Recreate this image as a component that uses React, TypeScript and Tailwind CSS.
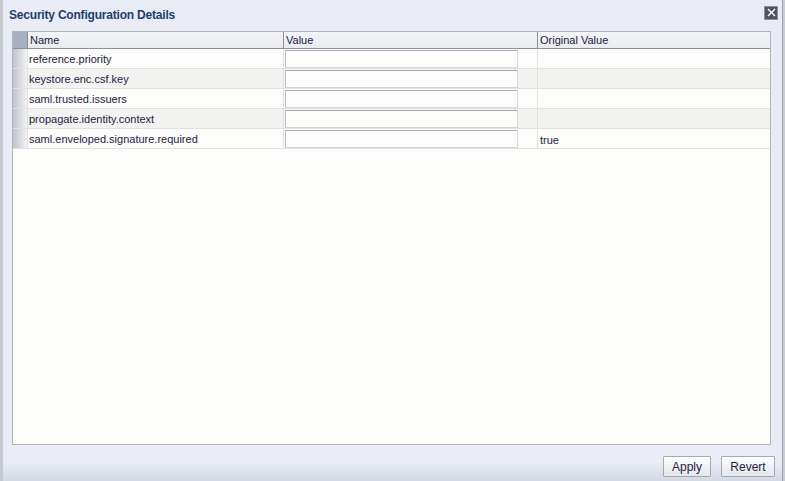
import React from "react";

const rows = [
  { name: "reference.priority", original: "" },
  { name: "keystore.enc.csf.key", original: "" },
  { name: "saml.trusted.issuers", original: "" },
  { name: "propagate.identity.context", original: "" },
  { name: "saml.enveloped.signature.required", original: "true" },
];

const App = () => {
  return (
    <div
      className="w-[785px] h-[481px] flex bg-[#e9ecf4] text-[#1c2246] overflow-hidden"
      style={{ fontFamily: '"Liberation Sans", Arial, sans-serif' }}
    >
      <div className="w-[3px] bg-[#c6c9d0]" />
      <div className="flex-1 flex flex-col">
        {/* title bar */}
        <div className="h-[29px] flex items-center justify-between pl-[6px] pr-[4px]">
          <span className="text-[12px] font-bold text-[#1e3f6b] tracking-[-0.2px]">
            Security Configuration Details
          </span>
          <button className="w-[14px] h-[14px] mb-[4px] bg-[#4f545c] border border-[#8a8f98] flex items-center justify-center">
            <svg width="9" height="9" viewBox="0 0 9 9">
              <path d="M1 1L8 8M8 1L1 8" stroke="#ffffff" strokeWidth="1.4" />
            </svg>
          </button>
        </div>

        {/* table */}
        <div className="ml-[9px] mr-[11px] h-[414px] border border-[#b4b4b4] bg-[#fcfcfa] mt-[2px]">
          <div className="h-[17px] flex border-b border-[#8e9098] bg-gradient-to-b from-[#f4f5f7] to-[#e9ebee] text-[11px] leading-[17px]">
            <div className="w-[15px] bg-[#a8b0c2] border-r border-[#8e9098]" />
            <div className="w-[256px] pl-[2px] border-r border-[#8e9098]">Name</div>
            <div className="w-[254px] pl-[2px] border-r border-[#8e9098]">Value</div>
            <div className="flex-1 pl-[2px]">Original Value</div>
          </div>
          {rows.map((r, i) => (
            <div
              key={r.name}
              className={`h-[20px] flex border-b border-[#e2e2e2] text-[11px] ${
                i % 2 === 1 ? "bg-[#f2f2f0]" : "bg-[#fcfcfa]"
              }`}
            >
              <div className="w-[15px] bg-gradient-to-r from-[#bfc3cc] to-[#f2f3f6] border-r border-[#e2e2e2]" />
              <div className="w-[256px] pl-[1px] pt-[2px] flex items-center border-r border-[#e2e2e2]">
                {r.name}
              </div>
              <div className="w-[254px] pl-[1px] flex items-center border-r border-[#e2e2e2]">
                <div className="w-[233px] h-[18px] bg-[#fcfcfa] border border-[#d4d6da] border-t-[#a6abb4] border-l-[#b8bcc4]" />
              </div>
              <div className="flex-1 pl-[2px] flex items-center pt-[3px]">{r.original}</div>
            </div>
          ))}
        </div>

        {/* footer */}
        <div className="flex-1 flex items-start justify-end gap-[10px] pr-[7px] pt-[11px] bg-gradient-to-b from-[#e9ecf4] from-50% to-[#d3d8e2]">
          <button className="w-[48px] h-[21px] text-[12px] text-[#1c2246] border border-[#a4a8b0] bg-gradient-to-b from-[#ffffff] to-[#e4e6ea] rounded-[1px]">
            Apply
          </button>
          <button className="w-[54px] h-[21px] text-[12px] text-[#1c2246] border border-[#a4a8b0] bg-gradient-to-b from-[#ffffff] to-[#e4e6ea] rounded-[1px]">
            Revert
          </button>
        </div>
      </div>
      <div className="w-[3px] bg-[#c9ccd2] border-l border-[#9fa3aa]" />
    </div>
  );
};

export default App;
